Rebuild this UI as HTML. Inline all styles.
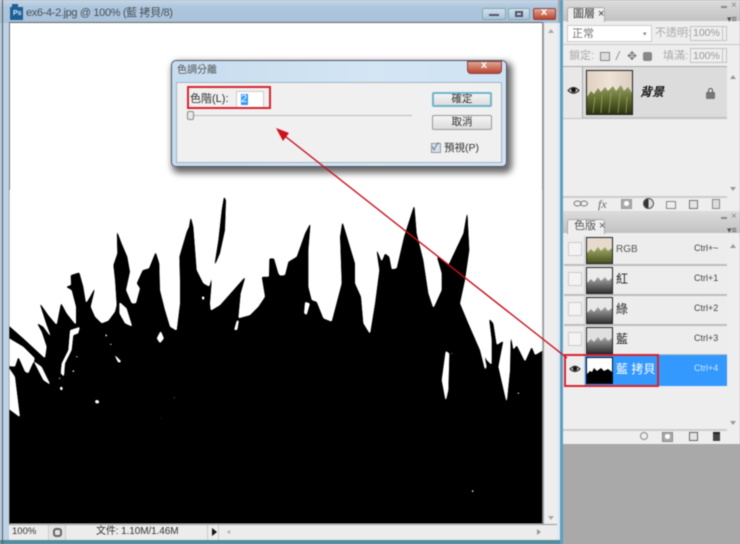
<!DOCTYPE html>
<html><head><meta charset="utf-8"><style>
html,body{margin:0;padding:0}
body{width:740px;height:544px;overflow:hidden;position:relative;background:#a9a9a9;font-family:"Liberation Sans","Noto Sans CJK TC",sans-serif;color:#444}
div{position:absolute;box-sizing:border-box}
#w{left:0;top:0;width:740px;height:544px;filter:blur(.4px);overflow:hidden}
.t{white-space:nowrap;line-height:1}
.tb{background:#eee;border:1px solid #c4c4c4}
.row{left:564px;width:163px;border-bottom:2px solid #bdbdbd;background:#ededed}
.chk{left:568px;width:14px;height:14px;border:1px solid #ccc;background:#f3f3f3}
.th{left:586px;width:27px;height:27px;border:1px solid #222;overflow:hidden}
.th svg{display:block}
.btn{left:432px;width:60px;height:15px;border-radius:2px;border:1px solid #999;background:linear-gradient(#f4f4f4,#dcdcdc);text-align:center;font-size:10.5px;line-height:13px;color:#333}
.c{font-size:9px;left:694px;color:#444}
</style></head><body>
<div id="w">
<!-- doc window -->
<div style="left:0;top:0;width:558px;height:544px;background:#bcd2e6"></div>
<div style="left:0;top:0;width:558px;height:23px;background:linear-gradient(#c6d7e7,#aec6dd 30%,#a9c2da)"></div>
<div style="left:556px;top:23px;width:5px;height:521px;background:#dfe9f2"></div>
<div style="left:0;top:540px;width:561px;height:4px;background:#4f8da0"></div>
<div style="left:2px;top:0;width:1px;height:544px;background:#555"></div>
<div style="left:10px;top:7px;width:13px;height:13px;background:#1d5f97"></div>
<div style="left:12px;top:4px;width:6px;height:4px;background:#1d5f97"></div>
<div class="t" style="left:13px;top:10px;font-size:7px;font-weight:bold;color:#dce8f2">Ps</div>
<div class="t" style="left:26px;top:8px;font-size:11px;letter-spacing:-.35px;color:#46505a">ex6-4-2.jpg @ 100% (藍 拷貝/8)</div>
<!-- window buttons -->
<div style="left:482px;top:8px;width:24px;height:12px;border:1px solid #8aa;border-radius:2px;background:linear-gradient(#d0e0ef,#a9c3db)"></div>
<div style="left:489px;top:14px;width:10px;height:2px;background:#556"></div>
<div style="left:508px;top:8px;width:22px;height:12px;border:1px solid #8aa;border-radius:2px;background:linear-gradient(#d0e0ef,#a9c3db)"></div>
<div style="left:515px;top:11px;width:8px;height:6px;border:2px solid #556"></div>
<div style="left:533px;top:8px;width:23px;height:12px;border:1px solid #844;border-radius:2px;background:linear-gradient(#e4a795,#b8452f)"></div>
<div class="t" style="left:541px;top:7px;font-size:11px;font-weight:bold;color:#fff">x</div>
<!-- canvas -->
<div style="left:9px;top:22px;width:534px;height:502px;background:#fff;border-top:1px solid #666;border-left:1px solid #777"></div>
<div style="left:542px;top:23px;width:15px;height:501px;background:#eee;border-left:2px solid #999"></div>
<div style="left:548px;top:26px;width:0;height:0;border:3px solid transparent;border-bottom:4px solid #aaa"></div>
<div style="left:548px;top:516px;width:0;height:0;border:3px solid transparent;border-top:4px solid #aaa"></div>
<svg style="position:absolute;left:0;top:0" width="740" height="544">
<defs><filter id="sm" filterUnits="userSpaceOnUse" x="-60" y="-60" width="1780" height="1160" color-interpolation-filters="sRGB"><feGaussianBlur stdDeviation="2.6"/><feComponentTransfer><feFuncR type="linear" slope="5" intercept="-2"/><feFuncG type="linear" slope="5" intercept="-2"/><feFuncB type="linear" slope="5" intercept="-2"/></feComponentTransfer></filter></defs>
<svg x="9.5" y="190" width="532.7" height="333.5" viewBox="28.5 0 1598 1000">
<g filter="url(#sm)">
<rect x="-50" y="-50" width="1750" height="1150" fill="#fff"/>
<path fill="#000" d="M0,384 28,408 70,445 135,505 140,470 125,425 110,398 130,410 155,445 140,405 117,335 145,375 170,405 183,338 200,370 228,405 228,350 215,300 197,290 213,285 212,255 238,247 250,290 258,340 270,320 287,288 272,350 285,380 305,400 325,392 345,365 350,345 345,270 340,225 352,190 350,120 365,160 382,200 390,245 378,300 395,340 408,340 420,295 410,280 428,240 447,235 467,185 478,220 480,300 495,360 510,410 530,422 540,340 540,280 538,200 560,125 567,110 572,78 580,110 590,240 610,280 628,290 637,250 630,340 632,362 660,345 700,300 737,258 722,310 715,385 750,375 775,350 795,320 785,260 807,260 808,205 822,205 835,250 840,257 855,255 865,215 890,200 915,130 932,97 925,180 925,290 935,330 950,335 970,385 995,395 1025,280 1020,140 1027,93 1050,170 1065,220 1065,280 1083,320 1090,400 1110,432 1125,340 1138,240 1128,172 1145,215 1155,190 1168,200 1175,238 1190,235 1212,140 1243,43 1250,130 1270,210 1285,310 1300,355 1325,300 1325,250 1310,198 1345,225 1390,130 1402,60 1408,180 1395,270 1380,340 1405,400 1440,480 1455,540 1460,530 1450,482 1460,510 1475,525 1475,450 1467,385 1480,400 1490,465 1510,452 1495,530 1520,640 1530,540 1532,432 1540,480 1550,465 1575,515 1595,470 1605,495 1627,482 1670,465 1670,1060 0,1060Z"/>
<path fill="#000" d="M672,18 678,30 675,120 660,190 642,232 655,150 665,60Z"/>
<path fill="#fff" d="M0,430 28,445 70,470 105,505 85,550 75,545 55,500 45,530 28,528 0,520ZM0,520 28,535 45,560 60,682 28,658 0,640ZM100,512 125,530 152,585 130,570ZM358,335 380,355 397,410 375,400 358,370ZM482,422 492,445 480,460 470,445ZM340,490 365,515 355,518ZM210,420 240,410 235,430 220,435 215,480 195,520 192,560 182,550 185,520 205,480ZM710,392 717,390 712,420 702,420ZM915,335 930,340 920,375 912,370ZM1337,482 1348,490 1345,600 1337,635 1325,570ZM285,630 296,630 298,640 286,640ZM605,318 614,320 612,330 606,328ZM180,590h8v10h-8ZM176,562h5v6h-5ZM228,497h5v6h-5ZM217,540h6v6h-6ZM316,432h5v8h-5ZM330,460h5v6h-5ZM521,620h4v6h-4ZM481,682h5v4h-5ZM1552,607h6v5h-6ZM1415,900h6v6h-6ZM1353,488h5v5h-5Z"/>
</g>
</svg>
</svg>
<!-- status bar -->
<div style="left:9px;top:524px;width:548px;height:16px;background:#ececec;border-top:1px solid #999"></div>
<div class="t" style="left:12px;top:527px;font-size:9.5px;color:#333">100%</div>
<div style="left:48px;top:525px;width:18px;height:15px;background:#e4e4e4;border-left:1px solid #ccc;border-right:1px solid #ccc"></div>
<div style="left:53px;top:528px;width:9px;height:9px;border:2px solid #666;border-radius:3px"></div>
<div class="t" style="left:96px;top:527px;font-size:10px;letter-spacing:-.1px;color:#333">文件: 1.10M/1.46M</div>
<div style="left:212px;top:528px;width:0;height:0;border:4px solid transparent;border-left:5px solid #111"></div>
<div style="left:207px;top:525px;width:1px;height:15px;background:#ccc"></div>
<div style="left:218px;top:525px;width:1px;height:15px;background:#ccc"></div>
<div style="left:225px;top:530px;width:0;height:0;border:2.5px solid transparent;border-right:3px solid #aaa"></div>
<div style="left:537px;top:529px;width:0;height:0;border:3px solid transparent;border-left:4px solid #999"></div>
<!-- right panels -->
<div style="left:560px;top:0;width:3px;height:544px;background:#5f9ec0"></div>
<div style="left:563px;top:0;width:177px;height:444px;background:#eeeeee"></div>
<div style="left:563px;top:0;width:177px;height:21px;background:linear-gradient(#dcdcdc,#c2c2c2)"></div>
<div style="left:567px;top:7px;width:38px;height:15px;background:#eee;border:1px solid #aaa;border-bottom:0;border-radius:3px 3px 0 0"></div>
<div class="t" style="left:573px;top:9px;font-size:11px;color:#333">圖層 ×</div>
<div style="left:721px;top:6px;width:6px;height:1.5px;background:#888"></div>
<div class="t" style="left:731px;top:1px;font-size:10px;color:#888">×</div>
<div class="t" style="left:727px;top:15px;font-size:9px;color:#555">▾≡</div>
<div style="left:567px;top:25px;width:85px;height:17px;background:#fff;border:1px solid #ccc"></div>
<div class="t" style="left:572px;top:29px;font-size:11px;color:#777">正常</div>
<div class="t" style="left:643px;top:31px;font-size:7px;color:#888">▾</div>
<div class="t" style="left:655px;top:28px;font-size:11px;color:#aaa">不透明:</div>
<div class="tb" style="left:690px;top:26px;width:37px;height:15px"></div>
<div class="t" style="left:693px;top:28px;font-size:10.5px;color:#999">100%</div>
<div style="left:722px;top:26px;width:1px;height:15px;background:#c4c4c4"></div>
<div style="left:563px;top:44px;width:177px;height:1px;background:#c8c8c8"></div>
<div class="t" style="left:569px;top:51px;font-size:11px;color:#aaa">鎖定:</div>
<div style="left:600px;top:52px;width:10px;height:9px;border:1px solid #888;background:#ddd"></div>
<div class="t" style="left:616px;top:50px;font-size:12px;font-style:italic;color:#888">/</div>
<div class="t" style="left:627px;top:50px;font-size:12px;color:#777">✥</div>
<div style="left:643px;top:52px;width:9px;height:9px;background:#888;border-radius:2px"></div>
<div class="t" style="left:663px;top:51px;font-size:11px;color:#aaa">填滿:</div>
<div class="tb" style="left:690px;top:48px;width:37px;height:15px"></div>
<div class="t" style="left:693px;top:51px;font-size:10.5px;color:#999">100%</div>
<div style="left:722px;top:48px;width:1px;height:15px;background:#c4c4c4"></div>
<div style="left:563px;top:66px;width:164px;height:53px;background:#dcdcdc;border-top:1px solid #aaa;border-bottom:2px solid #c2c2c2"></div>
<div style="left:563px;top:67px;width:20px;height:51px;background:#e8e8e8;border-right:1px solid #aaa"></div>
<svg style="position:absolute;left:567px;top:85px" width="13" height="11"><path d="M1,5.500Q6.500,-.5 12,5.500 6.500,11 1,5.500Z" fill="#ccc" stroke="#222"/><circle cx="6.500" cy="5" r="2.400" fill="#111"/></svg>
<div style="left:586px;top:70px;width:47px;height:45px;border:1px solid #222;overflow:hidden">
<svg width="45" height="43" viewBox="0 0 45 43" style="display:block"><defs><linearGradient id="g1" x1="0" y1="0" x2="0" y2="1"><stop offset="0" stop-color="#9aa26a"/><stop offset=".5" stop-color="#5f6c2e"/><stop offset="1" stop-color="#2e3212"/></linearGradient><linearGradient id="g2" x1="0" y1="0" x2="1" y2="0"><stop offset="0" stop-color="#dfd0bf"/><stop offset=".5" stop-color="#efe3d7"/><stop offset="1" stop-color="#dbcfc0"/></linearGradient></defs><rect width="45" height="43" fill="url(#g2)"/><path fill="url(#g1)" d="M0,26 4,20 7,23 11,17 14,21 18,16 21,20 26,15 29,20 34,14 37,20 41,16 45,22V43H0Z"/><path stroke="#a4ae68" stroke-width=".7" d="M6,42 8,26M14,42 15,24M22,42 24,22M31,42 33,22M39,42 40,26"/></svg></div>
<div class="t" style="left:640px;top:86px;font-size:12px;font-style:italic;font-weight:bold;color:#111">背景</div>
<div style="left:706px;top:92px;width:9px;height:7px;background:#777;border-radius:1px"></div>
<div style="left:708px;top:88px;width:5px;height:5px;border:1px solid #555;border-bottom:0;border-radius:3px 3px 0 0"></div>
<div style="left:730px;top:72px;width:0;height:0;border:3px solid transparent;border-bottom:4px solid #999"></div>
<div style="left:730px;top:187px;width:0;height:0;border:3px solid transparent;border-top:4px solid #999"></div>
<div style="left:563px;top:196px;width:164px;height:2px;background:#ccc"></div>
<svg style="position:absolute;left:573px;top:200px" width="16" height="7"><ellipse cx="4.500" cy="3.500" rx="3.500" ry="2.500" fill="none" stroke="#777"/><ellipse cx="11" cy="3.500" rx="3.500" ry="2.500" fill="none" stroke="#777"/></svg>
<div class="t" style="left:598px;top:198px;font-size:12px;font-style:italic;font-family:'Liberation Serif',serif;color:#666">fx</div>
<div style="left:621px;top:199px;width:11px;height:10px;background:#aaa;border:1px solid #999"></div>
<div style="left:624px;top:201px;width:5px;height:5px;background:#fff;border-radius:50%"></div>
<div style="left:643px;top:198px;width:11px;height:11px;border-radius:50%;background:linear-gradient(90deg,#333 50%,#ddd 50%);border:1px solid #555"></div>
<div style="left:666px;top:201px;width:10px;height:8px;border:1px solid #888;background:#eee"></div>
<div style="left:689px;top:200px;width:9px;height:9px;border:1px solid #777;background:#e4e4e4"></div>
<div style="left:712px;top:199px;width:8px;height:10px;border:1px solid #888;background:#ddd"></div>
<!-- channels -->
<div style="left:563px;top:211px;width:177px;height:22px;background:linear-gradient(#dcdcdc,#c2c2c2)"></div>
<div style="left:567px;top:219px;width:38px;height:15px;background:#eee;border:1px solid #aaa;border-bottom:0;border-radius:3px 3px 0 0"></div>
<div class="t" style="left:574px;top:221px;font-size:11px;color:#555">色版 ×</div>
<div style="left:721px;top:217px;width:6px;height:1.5px;background:#888"></div>
<div class="t" style="left:731px;top:212px;font-size:10px;color:#888">×</div>
<div class="t" style="left:727px;top:226px;font-size:9px;color:#555">▾≡</div>
<div class="row" style="top:236px;height:30px"></div>
<div class="row" style="top:266px;height:30px"></div>
<div class="row" style="top:296px;height:30px"></div>
<div class="row" style="top:326px;height:30px"></div>
<div style="left:584px;top:355px;width:143px;height:31px;background:#3399ff"></div>
<div style="left:584px;top:236px;width:1px;height:150px;background:#ccc"></div>
<div class="chk" style="top:242px"></div><div class="chk" style="top:272px"></div><div class="chk" style="top:302px"></div><div class="chk" style="top:332px"></div>
<svg style="position:absolute;left:569px;top:364px" width="12" height="10"><path d="M1,5Q6,-.5 11,5 6,10 1,5Z" fill="#ccc" stroke="#222"/><circle cx="6" cy="4.700" r="2.200" fill="#111"/></svg>
<svg width="0" height="0" style="position:absolute"><defs><linearGradient id="g3" x1="0" y1="0" x2="0" y2="1"><stop offset="0" stop-color="#aaa"/><stop offset="1" stop-color="#333"/></linearGradient><linearGradient id="g4" x1="0" y1="0" x2="0" y2="1"><stop offset="0" stop-color="#a4ae68"/><stop offset="1" stop-color="#4a5220"/></linearGradient></defs></svg>
<div class="th" style="top:237px"><svg width="25" height="25"><rect width="25" height="25" fill="#e6dacd"/><path fill="url(#g4)" d="M0,15 4,11 7,14 11,9 14,13 18,9 21,13 25,10V25H0Z"/></svg></div>
<div class="th" style="top:267px"><svg width="25" height="25"><rect width="25" height="25" fill="#ececec"/><path fill="url(#g3)" d="M0,15 4,11 7,14 11,9 14,13 18,9 21,13 25,10V25H0Z"/></svg></div>
<div class="th" style="top:297px"><svg width="25" height="25"><rect width="25" height="25" fill="#e8e8e8"/><path fill="url(#g3)" d="M0,15 4,11 7,14 11,9 14,13 18,9 21,13 25,10V25H0Z"/></svg></div>
<div class="th" style="top:327px"><svg width="25" height="25"><rect width="25" height="25" fill="#e0e0e0"/><path fill="url(#g3)" d="M0,15 4,11 7,14 11,9 14,13 18,9 21,13 25,10V25H0Z"/></svg></div>
<div class="th" style="top:357px;border-color:#012"><svg width="25" height="25"><rect width="25" height="25" fill="#fff"/><path fill="#000" d="M0,16 3,13 5,14 7,10 10,13 14,10 17,13 21,11 25,14V25H0Z"/></svg></div>
<div class="t" style="left:616px;top:245px;font-size:10px;color:#555">RGB</div>
<div class="t" style="left:616px;top:273px;font-size:12px;color:#222">紅</div>
<div class="t" style="left:616px;top:303px;font-size:12px;color:#222">綠</div>
<div class="t" style="left:616px;top:333px;font-size:12px;color:#222">藍</div>
<div class="t" style="left:616px;top:363px;font-size:12px;color:#fff">藍 拷貝</div>
<div class="t c" style="top:244px">Ctrl+~</div>
<div class="t c" style="top:274px">Ctrl+1</div>
<div class="t c" style="top:304px">Ctrl+2</div>
<div class="t c" style="top:334px">Ctrl+3</div>
<div class="t c" style="top:364px;color:#cfe6ff">Ctrl+4</div>
<div style="left:730px;top:241px;width:0;height:0;border:3px solid transparent;border-bottom:4px solid #999"></div>
<div style="left:730px;top:421px;width:0;height:0;border:3px solid transparent;border-top:4px solid #999"></div>
<div style="left:563px;top:429px;width:164px;height:2px;background:#ccc"></div>
<div style="left:640px;top:432px;width:8px;height:8px;border:1px solid #888;border-radius:50%"></div>
<div style="left:662px;top:432px;width:11px;height:10px;background:#aaa;border:1px solid #888"></div>
<div style="left:665px;top:434px;width:5px;height:5px;background:#fff;border-radius:50%"></div>
<div style="left:689px;top:432px;width:9px;height:9px;border:1px solid #666;background:#e4e4e4"></div>
<div style="left:713px;top:432px;width:7px;height:9px;background:#444;border-top:2px solid #222"></div>
<!-- dialog -->
<div style="left:171px;top:60px;width:336px;height:107px;border-radius:5px;background:linear-gradient(90deg,#c6dcef,#d4e6f4 60%,#cfe3f4);border:1px solid #556;box-shadow:3px 4px 7px 2px rgba(0,0,0,.6)"></div>
<div class="t" style="left:177px;top:66px;font-size:10px;color:#555">色調分離</div>
<div style="left:467px;top:61px;width:35px;height:13px;border-radius:0 0 4px 4px;background:linear-gradient(#e4a795,#b8452f);border:1px solid #844"></div>
<div class="t" style="left:481px;top:60px;font-size:11px;font-weight:bold;color:#fff">x</div>
<div style="left:176px;top:82px;width:326px;height:81px;background:#f0f0f0;border:1px solid #a5b5c2"></div>
<div class="t" style="left:190px;top:94px;font-size:11px;color:#333">色階(L):</div>
<div style="left:236px;top:91px;width:28px;height:17px;background:#fff;border:1px solid #ccc"></div>
<div style="left:241px;top:94px;width:7px;height:11px;background:#3399ff"></div>
<div class="t" style="left:241px;top:94px;font-size:11px;color:#fff">2</div>
<div style="left:190px;top:115px;width:222px;height:1px;background:#bbb"></div>
<div style="left:187px;top:111px;width:7px;height:9px;background:#e8e8e8;border:1px solid #888;border-radius:2px"></div>
<div class="btn" style="top:92px;border:2px solid #6fb4cc;line-height:11px">確定</div>
<div class="btn" style="top:115px">取消</div>
<div style="left:431px;top:143px;width:10px;height:10px;background:#d3dfee;border:1px solid #999"></div>
<div class="t" style="left:432px;top:143px;font-size:10px;color:#456">✓</div>
<div class="t" style="left:444px;top:143px;font-size:10.5px;color:#333">預視(P)</div>
<!-- annotations -->
<div style="left:187px;top:86px;width:84px;height:23px;border:2px solid #d8232f"></div>
<div style="left:564px;top:354px;width:95px;height:33px;border:2px solid #d8232f"></div>
<svg style="position:absolute;left:0;top:0" width="740" height="544"><path d="M281,133 567,358" stroke="#c8101c" stroke-width="1.4" fill="none"/><path d="M276,128 289,133 283,141Z" fill="#d0101c"/></svg>
</div>
</body></html>
